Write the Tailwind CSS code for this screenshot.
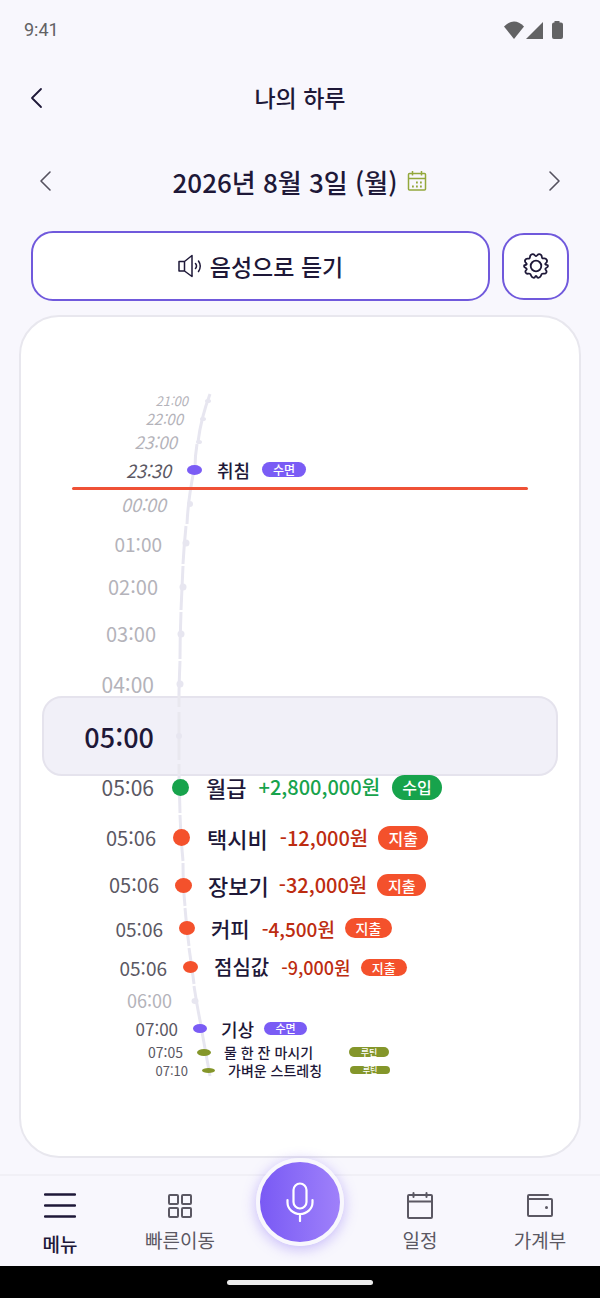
<!DOCTYPE html>
<html lang="ko">
<head>
    <meta charset="UTF-8">
    <meta name="viewport" content="width=device-width, initial-scale=1.0">
    <title>나의 하루</title>
    <script src="https://cdn.jsdelivr.net/npm/@tailwindcss/browser@4"></script>
</head>
<body class="bg-[#f8f7fd] font-['Noto_Sans_CJK_KR',sans-serif] text-[#1e1838]">
    <div class="flex min-h-screen flex-col">
        <!-- Status bar -->
        <div class="flex h-15 items-center justify-between pr-9 pl-6 text-[#626264]">
            <span class="font-[Roboto,sans-serif] text-lg">9:41</span>
            <svg class="h-5 w-15" viewBox="0 0 60 20" fill="currentColor" aria-hidden="true">
                <path d="M10 19 0 6.500Q10-3.500 20 6.500Z"/>
                <path d="M39 19H22L39 2Z"/>
                <path d="M50.500 1H55.500V2.500H57Q59 2.500 59 4.500V17Q59 19 57 19H50Q48 19 48 17V4.500Q48 2.500 50 2.500H50.500Z"/>
            </svg>
        </div>

        <!-- Title -->
        <header class="grid h-[75px] grid-cols-[72px_1fr_72px] items-center">
            <button type="button" aria-label="뒤로" class="flex justify-center">
                <svg class="size-6" viewBox="0 0 24 24" fill="none" stroke="currentColor" stroke-width="1.800" stroke-linecap="round" stroke-linejoin="round"><path d="M17 3 8 12l9 9"/></svg>
            </button>
            <h1 class="text-center text-[23px] font-medium">나의 하루</h1>
        </header>

        <main class="flex flex-1 flex-col px-[19px] pb-4">
            <!-- Date picker -->
            <div class="flex h-24 items-center justify-between px-3.5 pb-1">
                <button type="button" aria-label="이전 날짜" class="text-[#55515f]">
                    <svg class="size-6" viewBox="0 0 24 24" fill="none" stroke="currentColor" stroke-width="1.600" stroke-linecap="round" stroke-linejoin="round"><path d="M17 3 8 12l9 9"/></svg>
                </button>
                <button type="button" class="flex items-center gap-2.5 text-[26px] font-medium">
                    2026년 8월 3일 (월)
                    <svg class="size-5" viewBox="0 0 20 20" fill="none" stroke="#93a83c" stroke-width="1.500" aria-hidden="true">
                        <rect x="1.500" y="2.500" width="17" height="16.500" rx="1"/>
                        <path d="M1.500 7.500h17M5.500 0v4.500M14.500 0v4.500"/>
                        <path d="M9 11.500h1.800M13 11.500h1.800M5 15.500h1.800M9 15.500h1.800M13 15.500h1.800" stroke-width="1.900"/>
                    </svg>
                </button>
                <button type="button" aria-label="다음 날짜" class="text-[#55515f]">
                    <svg class="size-6" viewBox="0 0 24 24" fill="none" stroke="currentColor" stroke-width="1.600" stroke-linecap="round" stroke-linejoin="round"><path d="m7 3 9 9-9 9"/></svg>
                </button>
            </div>

            <!-- Actions -->
            <div class="flex items-center gap-3 px-3">
                <button type="button" class="flex h-[70px] flex-1 items-center justify-center gap-2 rounded-[22px] border-2 border-[#7059dc] bg-white text-[23px] font-medium">
                    <svg class="size-6" viewBox="0 0 24 24" fill="none" stroke="currentColor" stroke-width="1.500" stroke-linejoin="round" stroke-linecap="round" aria-hidden="true">
                        <path d="M1 7.500h5.500v9.500H1ZM6.500 7.500 14 1.500v21L6.500 17"/>
                        <path d="M17.500 9.500q2 2.500 0 5M20.500 7q3.500 5 0 10.500"/>
                    </svg>
                    음성으로 듣기
                </button>
                <button type="button" aria-label="설정" class="flex size-[67px] items-center justify-center rounded-[22px] border-2 border-[#7059dc] bg-white">
                    <svg class="size-7" viewBox="0 0 28 28" fill="none" stroke="currentColor" stroke-width="1.800" stroke-linejoin="round">
                        <circle cx="14" cy="14" r="5.300"/>
                        <path d="M14 4.200C15.500 3.800 15.500 1.400 18.200 2.300S19 5.700 20.500 6.300 23.500 5.300 24.800 8 22.600 11.200 23.300 12.300 26 12.300 26 14 23.300 15.700 23.300 17 25.400 18.300 24.300 20.600 21.200 20.800 19.900 21.900 19.500 25 16.800 25.700 15.500 23.800 14 23.800 13.900 26.400 11.200 25.700 9.600 23.200 8.100 21.900 5 23.200 3.700 20.600 5.200 18.300 4.700 17 2 15.700 2 14 4.200 13.600 4.700 12.300 1.900 10.700 3.200 8 6.300 7.500 7.500 6.300 7.100 3.200 9.800 2.300 12.500 3.800 14 4.200Z"/>
                    </svg>
                </button>
            </div>

            <!-- Timeline wheel -->
            <section aria-label="하루 일정" class="relative mt-3.5 rounded-[40px] border-2 border-[#e8e7ee] bg-white pt-[74px] pb-[77px]">
                <div class="absolute inset-x-[21px] top-[379px] h-20 rounded-[20px] border-2 border-[#e5e3ed] bg-[#f1f0f8]"></div>
                <svg class="absolute top-[75px] left-px h-[688px] w-60" viewBox="0 0 240 688" fill="none" stroke="#e7e6f0" stroke-width="3" aria-hidden="true">
                    <path d="M188 2Q179 26 176 50M175 52Q173 64 173 76M172 78Q166 108 165 132M164 134Q162 154 161 172M161 174Q160 196 159 218M159 220Q158 244 158 267M158 269Q157 294 157 303"/>
                    <path stroke="#e9e8ef" d="M157 303V315M157 320V368M157 372V383"/>
                    <path d="M157 383 158 421M158 423Q159 448 161 469M161 471Q161 494 163 514M163 516Q165 538 167 554M167 556Q170 576 172 592M172 594Q176 620 180 638M180 640 188 684"/>
                    <g fill="#e7e6f0" stroke="none">
                        <ellipse cx="186" cy="9" rx="3" ry="2"/>
                        <ellipse cx="181" cy="27" rx="3" ry="2"/>
                        <ellipse cx="177" cy="50" rx="3" ry="2"/>
                        <circle cx="168" cy="112" r="3"/>
                        <circle cx="164" cy="151" r="3.500"/>
                        <circle cx="161" cy="195" r="3.500"/>
                        <circle cx="159" cy="242" r="3.500"/>
                        <circle cx="158" cy="292" r="3.500"/>
                        <circle cx="157" cy="344" r="3"/>
                        <ellipse cx="173" cy="609" rx="3.500" ry="3"/>
                    </g>
                </svg>
                <div class="absolute inset-x-[51px] top-[170px] h-[3px] rounded-full bg-[#ef5136]"></div>

                <ol class="relative leading-none font-medium whitespace-nowrap">
                    <li class="flex h-[18px] items-center">
                        <time class="w-[167px] text-right text-[13px] font-normal text-[#b4b3ba] italic">21:00</time>
                    </li>
                    <li class="flex h-[18px] items-center">
                        <time class="w-[162px] text-right text-[15px] font-normal text-[#b4b3ba] italic">22:00</time>
                    </li>
                    <li class="flex h-7 items-center">
                        <time class="w-[156px] text-right text-[17px] font-normal text-[#b4b3ba] italic">23:00</time>
                    </li>
                    <li class="flex h-[29px] items-center">
                        <time class="w-[150px] text-right text-lg font-normal text-[#5b5863] italic">23:30</time>
                        <span class="flex w-[46px] justify-center"><i class="h-2.5 w-[15px] rounded-[50%] bg-[#7a5cf5]"></i></span>
                        <span class="text-lg">취침</span>
                        <span class="ml-3 flex h-[15px] w-[44px] items-center justify-center rounded-full bg-[#7a5cf5] text-xs text-white">수면</span>
                    </li>
                    <li class="flex h-[39px] items-center">
                        <time class="w-[145px] text-right text-lg font-normal text-[#b4b3ba] italic">00:00</time>
                    </li>
                    <li class="flex h-10 items-center">
                        <time class="w-[141px] text-right text-[19px] font-normal text-[#b4b3ba]">01:00</time>
                    </li>
                    <li class="flex h-[47px] items-center">
                        <time class="w-[137px] text-right text-xl font-normal text-[#b4b3ba]">02:00</time>
                    </li>
                    <li class="flex h-12 items-center">
                        <time class="w-[135px] text-right text-xl font-normal text-[#b4b3ba]">03:00</time>
                    </li>
                    <li class="flex h-[53px] items-center">
                        <time class="w-[133px] text-right text-[21px] font-normal text-[#b4b3ba]">04:00</time>
                    </li>
                    <li class="flex h-[50px] items-center" aria-current="time">
                        <time class="w-[133px] text-right text-[27px]">05:00</time>
                    </li>
                    <li class="flex h-[52px] items-center">
                        <time class="w-[133px] text-right text-[21px] font-normal text-[#5b5863]">05:06</time>
                        <span class="flex w-[52px] justify-center"><i class="size-[17px] rounded-[50%] bg-[#17a34c]"></i></span>
                        <span class="text-[22px]">월급</span>
                        <span class="ml-3 text-xl text-[#17a34c]">+2,800,000원</span>
                        <span class="ml-3 flex h-[25px] w-[50px] items-center justify-center rounded-full bg-[#17a34c] text-base text-white">수입</span>
                    </li>
                    <li class="flex h-[49px] items-center">
                        <time class="w-[135px] text-right text-xl font-normal text-[#5b5863]">05:06</time>
                        <span class="flex w-[51px] justify-center"><i class="size-[17px] rounded-[50%] bg-[#f4512c]"></i></span>
                        <span class="text-[22px]">택시비</span>
                        <span class="ml-3 text-xl text-[#bd2c10]">-12,000원</span>
                        <span class="ml-2.5 flex h-6 w-[50px] items-center justify-center rounded-full bg-[#f4512c] text-base text-white">지출</span>
                    </li>
                    <li class="flex h-[46px] items-center">
                        <time class="w-[138px] text-right text-xl font-normal text-[#5b5863]">05:06</time>
                        <span class="flex w-[49px] justify-center"><i class="h-[15px] w-[17px] rounded-[50%] bg-[#f4512c]"></i></span>
                        <span class="text-[22px]">장보기</span>
                        <span class="ml-2.5 text-xl text-[#bd2c10]">-32,000원</span>
                        <span class="ml-2.5 flex h-[22px] w-[49px] items-center justify-center rounded-full bg-[#f4512c] text-[15px] text-white">지출</span>
                    </li>
                    <li class="flex h-10 items-center">
                        <time class="w-[142px] text-right text-[19px] font-normal text-[#5b5863]">05:06</time>
                        <span class="flex w-12 justify-center"><i class="h-3.5 w-4 rounded-[50%] bg-[#f4512c]"></i></span>
                        <span class="text-[21px]">커피</span>
                        <span class="ml-3 text-[19px] text-[#bd2c10]">-4,500원</span>
                        <span class="ml-2.5 flex h-5 w-[47px] items-center justify-center rounded-full bg-[#f4512c] text-sm text-white">지출</span>
                    </li>
                    <li class="flex h-[38px] items-center">
                        <time class="w-[146px] text-right text-[19px] font-normal text-[#5b5863]">05:06</time>
                        <span class="flex w-[47px] justify-center"><i class="h-3 w-[15px] rounded-[50%] bg-[#f4512c]"></i></span>
                        <span class="text-xl">점심값</span>
                        <span class="ml-3 text-lg text-[#bd2c10]">-9,000원</span>
                        <span class="ml-2.5 flex h-[17px] w-[46px] items-center justify-center rounded-full bg-[#f4512c] text-[13px] text-white">지출</span>
                    </li>
                    <li class="flex h-7 items-center">
                        <time class="w-[151px] text-right text-lg font-normal text-[#b4b3ba]">06:00</time>
                    </li>
                    <li class="flex h-[29px] items-center">
                        <time class="w-[157px] text-right text-[17px] font-normal text-[#5b5863]">07:00</time>
                        <span class="flex w-[43px] justify-center"><i class="h-[9px] w-3.5 rounded-[50%] bg-[#7a5cf5]"></i></span>
                        <span class="text-lg">기상</span>
                        <span class="ml-2.5 flex h-[13px] w-[43px] items-center justify-center rounded-full bg-[#7a5cf5] text-[11px] text-white">수면</span>
                    </li>
                    <li class="flex h-[18px] items-center">
                        <time class="w-[162px] text-right text-sm font-normal text-[#5b5863]">07:05</time>
                        <span class="flex w-[41px] justify-center"><i class="h-[7px] w-3.5 rounded-[50%] bg-[#84962a]"></i></span>
                        <span class="text-sm">물 한 잔 마시기</span>
                        <span class="ml-9 flex h-2.5 w-10 items-center justify-center rounded-full bg-[#84962a] text-[9px] text-white">루틴</span>
                    </li>
                    <li class="flex h-[18px] items-center">
                        <time class="w-[167px] text-right text-[13px] font-normal text-[#5b5863]">07:10</time>
                        <span class="flex w-10 justify-center"><i class="h-[5px] w-[13px] rounded-[50%] bg-[#84962a]"></i></span>
                        <span class="text-sm">가벼운 스트레칭</span>
                        <span class="ml-7 flex h-2 w-10 items-center justify-center rounded-full bg-[#84962a] text-[8px] text-white">루틴</span>
                    </li>
                </ol>
            </section>
        </main>

        <!-- Bottom navigation -->
        <nav class="grid h-[92px] grid-cols-5 border-t-2 border-[#f1f0f6] text-[19px] leading-6 text-[#5b5863]">
            <a href="#" aria-current="page" class="flex flex-col items-center gap-2.5 pt-3.5 font-medium text-[#1e1838]">
                <svg class="size-8" viewBox="0 0 32 32" fill="none" stroke="currentColor" stroke-width="2.500" stroke-linecap="round" aria-hidden="true"><path d="M1 4.500h30M1 15.500h30M1 26.500h30"/></svg>
                메뉴
            </a>
            <a href="#" class="flex flex-col items-center gap-2 pt-4">
                <svg class="size-7" viewBox="0 0 28 28" fill="none" stroke="currentColor" stroke-width="2" aria-hidden="true">
                    <rect x="3" y="3" width="9" height="9" rx="1"/><rect x="16" y="3" width="9" height="9" rx="1"/><rect x="3" y="16" width="9" height="9" rx="1"/><rect x="16" y="16" width="9" height="9" rx="1"/>
                </svg>
                빠른이동
            </a>
            <button type="button" aria-label="음성 입력" class="z-10 -mt-[18px] flex size-[88px] items-center justify-center justify-self-center rounded-full border-4 border-[#f8f7fd] bg-linear-to-r from-[#7857f4] to-[#a182fa] bg-origin-border text-white shadow-[0_3px_14px_rgba(122,92,245,0.4)]">
                <svg class="h-10 w-7" viewBox="0 0 28 40" fill="none" stroke="currentColor" stroke-width="2.200" stroke-linecap="round" aria-hidden="true">
                    <rect x="7.500" y="1.500" width="13" height="25" rx="6.500"/>
                    <path d="M1.500 18v2.500a12.500 11.500 0 0 0 25 0V18M14 32v7"/>
                </svg>
            </button>
            <a href="#" class="flex flex-col items-center gap-2 pt-4">
                <svg class="size-7" viewBox="0 0 28 28" fill="none" stroke="currentColor" stroke-width="2" stroke-linecap="round" aria-hidden="true"><rect x="2" y="3" width="24" height="23" rx="1"/><path d="M2 9.500h24M7.500 1v4M20.500 1v4"/></svg>
                일정
            </a>
            <a href="#" class="flex flex-col items-center gap-2 pt-4">
                <svg class="size-7" viewBox="0 0 28 28" fill="none" stroke="currentColor" stroke-width="2" stroke-linecap="round" stroke-linejoin="round" aria-hidden="true"><path d="M22 3H3Q2 3 2 4V23Q2 24 3 24H25Q26 24 26 23V8Q26 7 25 7H3"/><circle cx="20.500" cy="15.500" r="1.500" fill="currentColor" stroke="none"/></svg>
                가계부
            </a>
        </nav>
        <div class="flex h-8 items-center justify-center bg-black">
            <span class="h-[5px] w-[146px] rounded-full bg-[#ececec]"></span>
        </div>
    </div>
</body>
</html>
